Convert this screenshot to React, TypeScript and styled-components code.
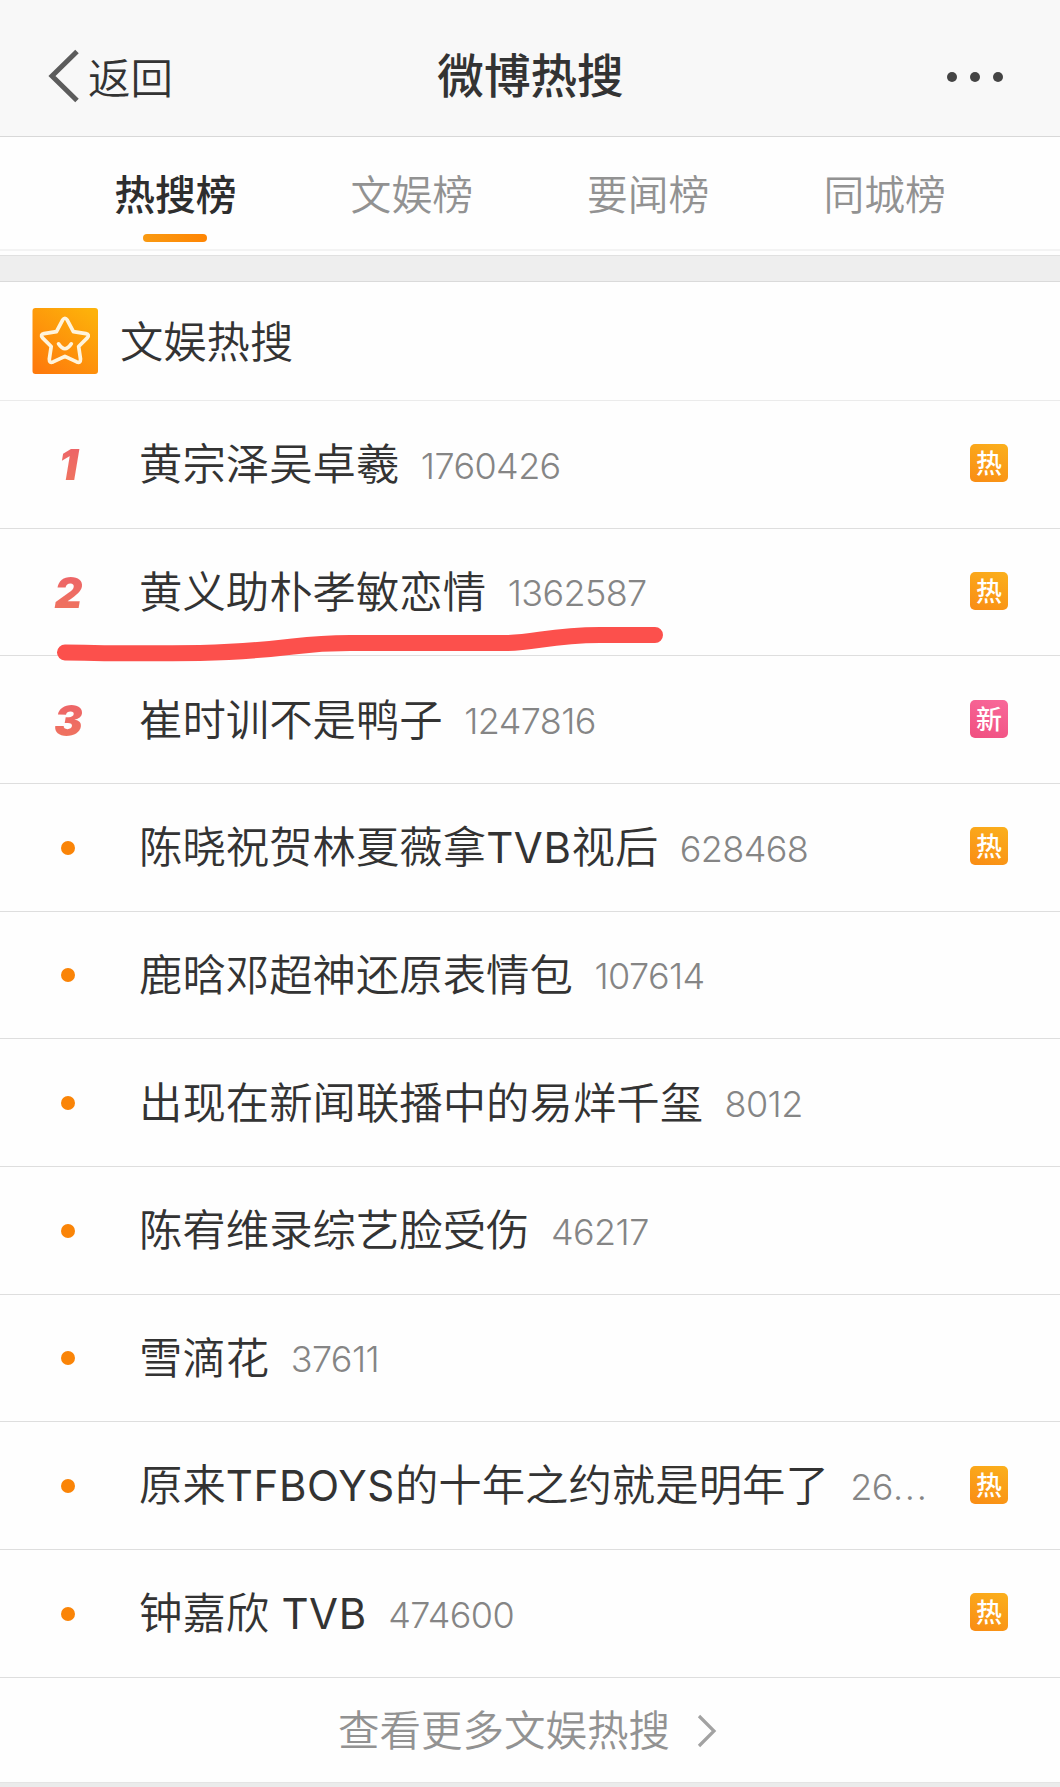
import React from "react";
import styled, { createGlobalStyle } from "styled-components";

const GlobalStyle = createGlobalStyle`
  *, *::before, *::after { box-sizing: border-box; }
  body { margin: 0; background: #fefefe; }
`;

const Page = styled.div`
  width: 1060px;
  height: 1787px;
  overflow: hidden;
  display: flex;
  flex-direction: column;
  background: #fefefe;
  color: #333;
  font-family: Inter, "Noto Sans CJK SC", sans-serif;
`;

const NavBar = styled.header`
  height: 137px;
  flex: none;
  display: grid;
  grid-template-columns: 1fr auto 1fr;
  align-items: center;
  padding: 16px 57px 0 48px;
  background: #f8f8f8;
  border-bottom: 1px solid #d8d8d8;
`;

const BackButton = styled.div`
  display: flex;
  align-items: center;
  gap: 9px;
  font-size: 42.5px;
  line-height: 60px;
  font-weight: 350;
  color: #333;
  svg { display: block; margin-top: -1px; }
`;

const BackLabel = styled.span`
  padding-top: 5px;
`;

const NavTitle = styled.h1`
  margin: 0;
  padding-left: 10px;
  font-size: 46.6px;
  line-height: 60px;
  font-weight: 500;
  color: #333;
`;

const MoreDots = styled.div`
  justify-self: end;
  display: flex;
  gap: 13px;
  padding-top: 1px;
`;

const MoreDot = styled.i`
  width: 10px;
  height: 10px;
  border-radius: 50%;
  background: #444;
`;

const Tabs = styled.nav`
  height: 114px;
  flex: none;
  display: grid;
  grid-template-columns: repeat(4, 236.4px);
  justify-content: center;
  border-bottom: 2px solid #f3f3f3;
`;

const Tab = styled.div<{ $active?: boolean }>`
  display: flex;
  flex-direction: column;
  align-items: center;
  padding-top: 28px;
  font-size: 40.8px;
  line-height: 60px;
  font-weight: ${(p) => (p.$active ? 500 : 350)};
  color: ${(p) => (p.$active ? "#2e2e2e" : "#929292")};
  &::after {
    content: "";
    display: ${(p) => (p.$active ? "block" : "none")};
    width: 64px;
    height: 8px;
    margin-top: 9px;
    border-radius: 4px;
    background: linear-gradient(90deg, #f99a12, #ff8503);
  }
`;

const Divider = styled.div`
  height: 27px;
  margin-top: 4px;
  flex: none;
  background: #eee;
  border-top: 1px solid #e0e0e0;
  border-bottom: 1px solid #dadada;
`;

const SectionHeader = styled.div`
  height: 119px;
  flex: none;
  display: flex;
  align-items: center;
  gap: 22px;
  padding-left: 32px;
  border-bottom: 1px solid #ebebeb;
  font-size: 43.3px;
  line-height: 60px;
  font-weight: 350;
  svg { display: block; }
`;

const SectionTitle = styled.span`
  padding-top: 2px;
`;

const List = styled.div`
  position: relative;
  height: 1276.6px;
  flex: none;
  display: grid;
  grid-template-rows: repeat(10, 1fr);
`;

const Row = styled.div`
  display: flex;
  align-items: center;
  padding-right: 52px;
  border-bottom: 1px solid #dedede;
`;

const Marker = styled.div`
  width: 139px;
  flex: none;
  display: flex;
  align-items: center;
`;

const Rank = styled.span`
  width: 40px;
  margin-left: 48.5px;
  text-align: center;
  font: italic 900 43px/60px Inter, sans-serif;
  color: transparent;
  background: linear-gradient(180deg, #ec5f6b, #f0785c);
  background-clip: text;
  -webkit-background-clip: text;
`;

const Bullet = styled.i`
  width: 14px;
  height: 14px;
  margin-left: 61px;
  margin-top: 1px;
  border-radius: 50%;
  background: #fa8407;
`;

const Keyword = styled.span`
  font-size: 43.4px;
  line-height: 60px;
  font-weight: 350;
  white-space: pre;
`;

const Latin = styled.span`
  font-size: 42px;
  font-weight: 400;
  letter-spacing: 0.6px;
`;

const Count = styled.span`
  margin-left: 21.5px;
  padding-top: 3px;
  font-size: 36px;
  line-height: 60px;
  font-weight: 300;
  letter-spacing: -0.6px;
  color: #858585;
`;

const Ellipsis = styled.span`
  letter-spacing: 1.8px;
`;

const Badge = styled.span<{ $fresh: boolean }>`
  width: 38px;
  height: 38px;
  margin-left: auto;
  margin-bottom: 2px;
  padding-top: 2px;
  display: flex;
  align-items: center;
  justify-content: center;
  border-radius: 5px;
  font-size: 26px;
  line-height: 36px;
  font-weight: 500;
  color: #fff;
  background: ${(p) =>
    p.$fresh
      ? "linear-gradient(200deg, #f8699a, #f04f80)"
      : "linear-gradient(200deg, #fbb01c, #f98c14)"};
`;

const Scribble = styled.svg`
  position: absolute;
  left: 0;
  top: 220px;
  pointer-events: none;
`;

const MoreLink = styled.div`
  height: 100px;
  flex: none;
  display: flex;
  align-items: center;
  justify-content: center;
  gap: 27px;
  padding: 7px 5px 0 0;
  font-size: 41.5px;
  line-height: 60px;
  font-weight: 350;
  color: #929292;
`;

const PageFoot = styled.div`
  flex: 1;
  margin-top: 4px;
  background: #ebebeb;
  border-top: 1px solid #e4e4e4;
`;

type Item = { text: string; count: string; badge?: "热" | "新" };

const tabs = ["热搜榜", "文娱榜", "要闻榜", "同城榜"];

const items: Item[] = [
  { text: "黄宗泽吴卓羲", count: "1760426", badge: "热" },
  { text: "黄义助朴孝敏恋情", count: "1362587", badge: "热" },
  { text: "崔时训不是鸭子", count: "1247816", badge: "新" },
  { text: "陈晓祝贺林夏薇拿TVB视后", count: "628468", badge: "热" },
  { text: "鹿晗邓超神还原表情包", count: "107614" },
  { text: "出现在新闻联播中的易烊千玺", count: "8012" },
  { text: "陈宥维录综艺脸受伤", count: "46217" },
  { text: "雪滴花", count: "37611" },
  { text: "原来TFBOYS的十年之约就是明年了", count: "26...", badge: "热" },
  { text: "钟嘉欣 TVB", count: "474600", badge: "热" },
];

const renderText = (text: string) =>
  text
    .split(/([A-Z]+)/)
    .map((part, i) => (/^[A-Z]+$/.test(part) ? <Latin key={i}>{part}</Latin> : part));

const renderCount = (count: string) =>
  count.endsWith("...") ? (
    <>
      {count.slice(0, -3)}
      <Ellipsis>...</Ellipsis>
    </>
  ) : (
    count
  );

const StarIcon = () => (
  <svg width="66" height="66" viewBox="0 0 66 66" fill="none">
    <defs>
      <linearGradient id="star-bg" x1="10" y1="66" x2="56" y2="0" gradientUnits="userSpaceOnUse">
        <stop stopColor="#fe7a0c" />
        <stop offset="1" stopColor="#fdb20a" />
      </linearGradient>
    </defs>
    <rect x="0.500" width="65.500" height="66" rx="3" fill="url(#star-bg)" />
    <g
      transform="translate(1.900 1.500) scale(0.940)"
      stroke="#fff4dc"
      strokeWidth="3.900"
      strokeLinecap="round"
      strokeLinejoin="round"
    >
      <path d="M30.5 11.2Q33 7.4 35.500 11.200L42 23.600L55.300 25.600Q59.600 26.600 56.800 30.200L47.600 39.400L49.600 52.800Q49.700 57.300 45.600 55.800L33 49.800L20.400 55.800Q16.300 57.300 16.400 52.800L18.400 39.400L9.200 30.200Q6.400 26.600 10.700 25.600L24 23.600Z" />
      <path d="M26.200 36.500Q33 47 39.800 36.500" />
    </g>
  </svg>
);

export default function App() {
  return (
    <Page>
      <GlobalStyle />
      <NavBar>
        <BackButton>
          <svg width="31" height="54" viewBox="0 0 31 54" fill="none">
            <path d="M29 2.500L4 27L29 51.500" stroke="#5c5c5c" strokeWidth="5" />
          </svg>
          <BackLabel>返回</BackLabel>
        </BackButton>
        <NavTitle>微博热搜</NavTitle>
        <MoreDots>
          <MoreDot />
          <MoreDot />
          <MoreDot />
        </MoreDots>
      </NavBar>
      <Tabs>
        {tabs.map((label, i) => (
          <Tab key={label} $active={i === 0}>
            {label}
          </Tab>
        ))}
      </Tabs>
      <Divider />
      <SectionHeader>
        <StarIcon />
        <SectionTitle>文娱热搜</SectionTitle>
      </SectionHeader>
      <List>
        {items.map((item, i) => (
          <Row key={item.text}>
            <Marker>{i < 3 ? <Rank>{i + 1}</Rank> : <Bullet />}</Marker>
            <Keyword>{renderText(item.text)}</Keyword>
            <Count>{renderCount(item.count)}</Count>
            {item.badge && <Badge $fresh={item.badge === "新"}>{item.badge}</Badge>}
          </Row>
        ))}
        <Scribble width="700" height="60" viewBox="0 0 700 60" fill="none">
          <path
            d="M65 31.500C110 32.500 160 32.500 200 32C300 29 290 22 350 22H505C535 22 550 14 600 14H655"
            stroke="#fc504c"
            strokeWidth="16"
            strokeLinecap="round"
          />
        </Scribble>
      </List>
      <MoreLink>
        查看更多文娱热搜
        <svg width="20" height="34" viewBox="0 0 20 34" fill="none">
          <path d="M2 2L17 17L2 32" stroke="#a2a2a2" strokeWidth="3.200" />
        </svg>
      </MoreLink>
      <PageFoot />
    </Page>
  );
}
